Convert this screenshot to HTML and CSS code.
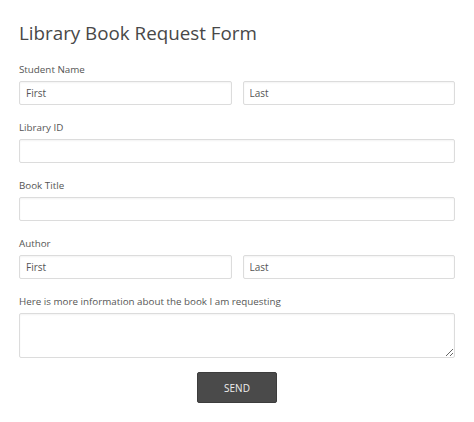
FILE: index.html
```html
<!DOCTYPE html>
<html lang="en">
<head>
    <meta charset="UTF-8">
    <meta name="viewport" content="width=device-width, initial-scale=1.0">
    <title>Library Book Request Form</title>
    <link rel="stylesheet" href="styles.css">
</head>
<body>
    <form class="form">
        <h1>Library Book Request Form</h1>

        <div class="field">
            <label>Student Name</label>
            <div class="pair">
                <input type="text" placeholder="First">
                <input type="text" placeholder="Last">
            </div>
        </div>

        <div class="field">
            <label>Library ID</label>
            <input type="text">
        </div>

        <div class="field">
            <label>Book Title</label>
            <input type="text">
        </div>

        <div class="field">
            <label>Author</label>
            <div class="pair">
                <input type="text" placeholder="First">
                <input type="text" placeholder="Last">
            </div>
        </div>

        <div class="field">
            <label>Here is more information about the book I am requesting</label>
            <textarea></textarea>
        </div>

        <div class="actions">
            <button type="button" class="send">SEND</button>
        </div>
    </form>
</body>
</html>
```

FILE: styles.css
```css
body {
    margin: 0;
    background-color: #fff;
    font-family: "Open Sans", Arial, sans-serif;
    color: #444;
}
.form {
    width: 436px;
    padding: 19px 0 0 19px;
}
h1 {
    margin: 0 0 16px;
    font-size: 18.8px;
    font-weight: 400;
    line-height: 28px;
    color: #484848;
}
.field {
    display: flex;
    flex-direction: column;
    margin-bottom: 16px;
}
label {
    font-size: 9.8px;
    line-height: 14px;
    margin-bottom: 4px;
    color: #555;
}
.pair {
    display: flex;
    gap: 11px;
}
.pair input {
    flex: 1;
    min-width: 0;
}
input, textarea {
    box-sizing: border-box;
    height: 24px;
    padding: 0 6px;
    border: 1px solid #dcdcdc;
    border-radius: 2px;
    box-shadow: inset 0 1px 2px rgba(0,0,0,0.05);
    font-family: "Open Sans", Arial, sans-serif;
    font-size: 10px;
    color: #555;
    background-color: #fff;
}
input::placeholder {
    color: #555;
}
textarea {
    height: 45px;
    resize: vertical;
}
.actions {
    display: flex;
    justify-content: center;
    margin-top: -2px;
}
.send {
    width: 80px;
    height: 31px;
    border: 1px solid #3d3d3d;
    border-radius: 2px;
    background-color: #4a4a4a;
    color: #eee;
    font-family: "Open Sans", Arial, sans-serif;
    font-size: 10px;
    cursor: pointer;
}
```
